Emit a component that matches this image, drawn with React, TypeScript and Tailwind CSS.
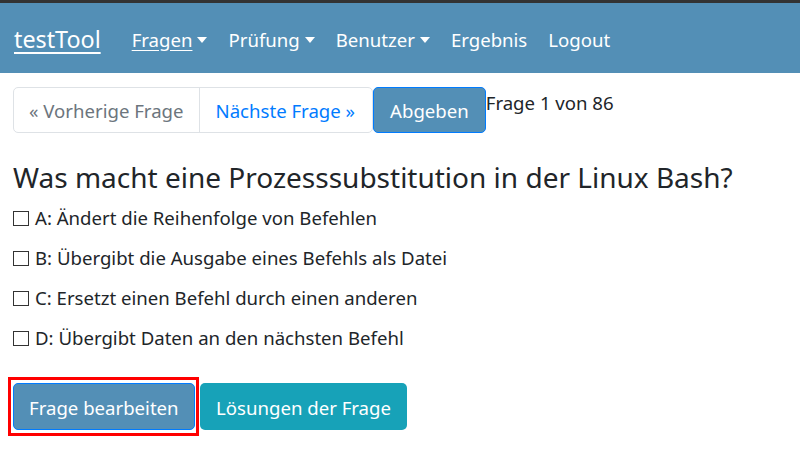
import React, { useState } from "react";

type Answer = { key: string; text: string };

const answers: Answer[] = [
  { key: "A", text: "Ändert die Reihenfolge von Befehlen" },
  { key: "B", text: "Übergibt die Ausgabe eines Befehls als Datei" },
  { key: "C", text: "Ersetzt einen Befehl durch einen anderen" },
  { key: "D", text: "Übergibt Daten an den nächsten Befehl" },
];

const Caret = () => (
  <span className="ml-[5px] inline-block h-0 w-0 border-x-[5px] border-t-[6px] border-x-transparent border-t-white align-[4px]" />
);

export default function App() {
  const [checked, setChecked] = useState<Record<string, boolean>>({});

  return (
    <div className="min-h-screen bg-white text-[#212529] [font-family:'Noto_Sans',sans-serif]">
      {/* Fensterrand oben */}
      <div className="h-[3px] bg-[#333333]" />

      {/* Navigation */}
      <nav className="flex h-[70px] items-center bg-[#538fb6] px-[14px] pt-[3px] text-white">
        <a href="#" className="mr-[31px] text-[23.3px] underline underline-offset-[4px]">
          testTool
        </a>
        <div className="flex items-center gap-[21px] text-[18.6px]">
          <a href="#" className="underline underline-offset-[3px]">
            Fragen
            <Caret />
          </a>
          <a href="#">
            Prüfung
            <Caret />
          </a>
          <a href="#">
            Benutzer
            <Caret />
          </a>
          <a href="#">Ergebnis</a>
          <a href="#">Logout</a>
        </div>
      </nav>

      <main className="px-[13px] pt-[14px]">
        {/* Blättern */}
        <div className="flex items-start text-[18.6px]">
          <div className="flex h-[46px] rounded-[5px] border border-[#dee2e6]">
            <button className="border-r border-[#dee2e6] px-[15px] pt-[2px] text-[#6c757d]">« Vorherige Frage</button>
            <button className="pl-[16px] pr-[17px] pt-[2px] text-[#007bff]">Nächste Frage »</button>
          </div>
          <button className="h-[46px] rounded-[5px] border border-[#007bff] bg-[#538fb6] px-[16px] pt-[2px] text-white">
            Abgeben
          </button>
          <span className="pt-[1px] leading-[30px]">Frage 1 von 86</span>
        </div>

        <h4 className="mt-[26px] text-[28px] leading-[36px]">Was macht eine Prozesssubstitution in der Linux Bash?</h4>

        <div className="mt-[3px] flex flex-col text-[18.6px]">
          {answers.map((a) => (
            <label key={a.key} className="flex h-[40px] cursor-pointer items-center">
              <input
                type="checkbox"
                className="hidden"
                checked={!!checked[a.key]}
                onChange={() => setChecked((c) => ({ ...c, [a.key]: !c[a.key] }))}
              />
              <span className="mr-[6px] flex h-[15px] w-[16px] items-center justify-center border border-[#333] text-[12px] leading-none">
                {checked[a.key] ? "✓" : ""}
              </span>
              {a.key}: {a.text}
            </label>
          ))}
        </div>

        <div className="mt-[25px] flex items-center">
          {/* Markierung um den Bearbeiten-Knopf */}
          <div className="-my-[6px] -ml-[5px] border-[3px] border-[#ff0000] py-[3px] pl-[2px] pr-[1px]">
            <button className="block h-[47px] rounded-[5px] border border-[#007bff] bg-[#538fb6] px-[15px] pt-[2px] text-[18.6px] text-white">
              Frage bearbeiten
            </button>
          </div>
          <button className="ml-[1px] h-[47px] rounded-[5px] bg-[#17a2b8] px-[16.5px] pt-[2px] text-[18.6px] text-white">
            Lösungen der Frage
          </button>
        </div>
      </main>
    </div>
  );
}
